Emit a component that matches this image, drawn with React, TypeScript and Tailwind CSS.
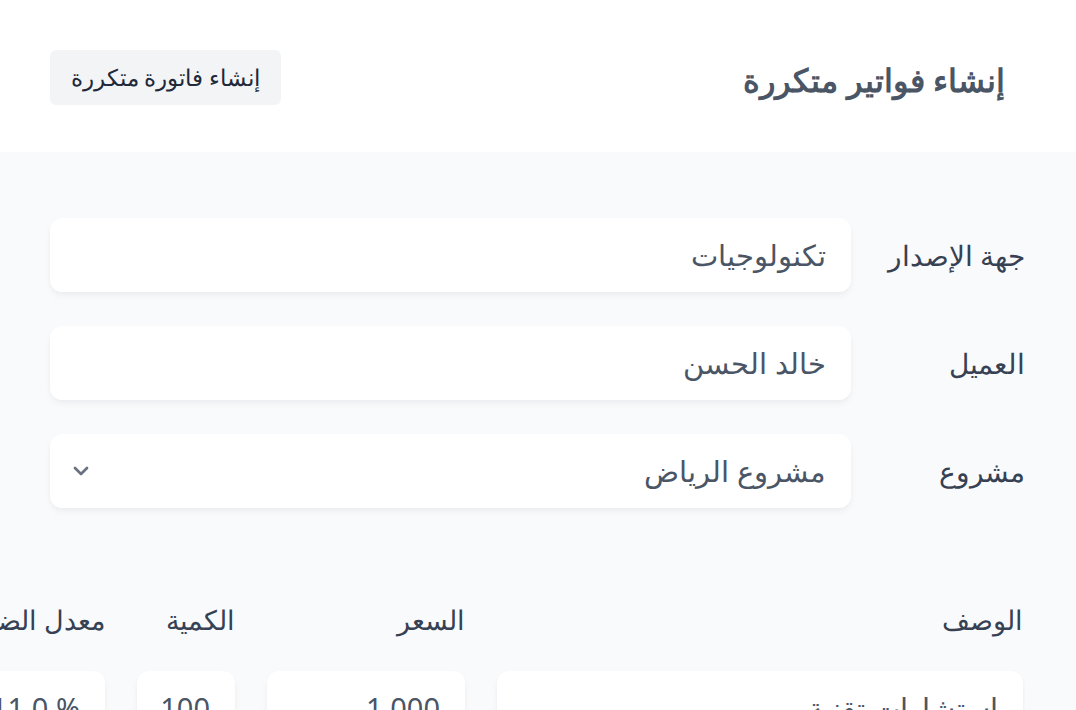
import { ChevronDown } from 'lucide-react';

const fields = [
  { label: 'جهة الإصدار', value: 'تكنولوجيات' },
  { label: 'العميل', value: 'خالد الحسن' },
];

const columns = [
  { title: 'الوصف', value: 'استشارات تقنية', width: 'w-[526px]', ltr: false },
  { title: 'السعر', value: '1,000', width: 'w-[198px]', ltr: true },
  { title: 'الكمية', value: '100', width: 'w-[98px]', ltr: true },
  { title: 'معدل الضريبة', value: '11.0 %', width: 'w-[140px]', ltr: true },
  { title: 'المجموع', value: '111,000', width: 'w-[200px]', ltr: true },
];

const inputBox = 'flex h-[74px] items-center rounded-xl bg-white px-[25px] text-[29px] text-gray-600 shadow-md shadow-gray-200/60';

const App = () => {
  return (
    <div dir="rtl" className="min-h-screen overflow-hidden bg-gray-50 font-['Noto_Sans',sans-serif]">
      <header className="flex h-[152px] items-center justify-between bg-white pl-[50px] pr-[71px]">
        <h1 className="mt-[8px] text-[32px] font-semibold text-gray-600">إنشاء فواتير متكررة</h1>
        <button className="mt-[2px] h-[55px] w-[231px] rounded-md bg-gray-100 text-[23px] text-gray-800">
          إنشاء فاتورة متكررة
        </button>
      </header>

      <main className="pl-[50px] pr-[51px] pt-[66px]">
        <div className="flex flex-col gap-[34px]">
          {fields.map(f => (
            <div key={f.label} className="flex items-center gap-[28px]">
              <label className="w-[146px] shrink-0 whitespace-nowrap text-[28px] text-gray-700">{f.label}</label>
              <div className={`${inputBox} flex-1`}>{f.value}</div>
            </div>
          ))}
          <div className="flex items-center gap-[28px]">
            <label className="w-[146px] shrink-0 text-[28px] text-gray-700">مشروع</label>
            <div className={`${inputBox} flex-1 justify-between`}>
              <span>مشروع الرياض</span>
              <ChevronDown className="-ml-[6px] h-6 w-6 text-gray-500" strokeWidth={2.75} />
            </div>
          </div>
        </div>

        <div className="-ml-[50px] mt-[92px] overflow-hidden">
          <div className="flex gap-[32px] pr-[2px]">
            {columns.map(c => (
              <div key={c.title} className={`${c.width} shrink-0`}>
                <div className="h-[50px] whitespace-nowrap text-[27px] text-gray-700">{c.title}</div>
                <div className={`${inputBox} mt-[21px] whitespace-nowrap`}>
                  {c.ltr ? <span dir="ltr">{c.value}</span> : c.value}
                </div>
              </div>
            ))}
          </div>
        </div>
      </main>
    </div>
  );
};

export default App;
